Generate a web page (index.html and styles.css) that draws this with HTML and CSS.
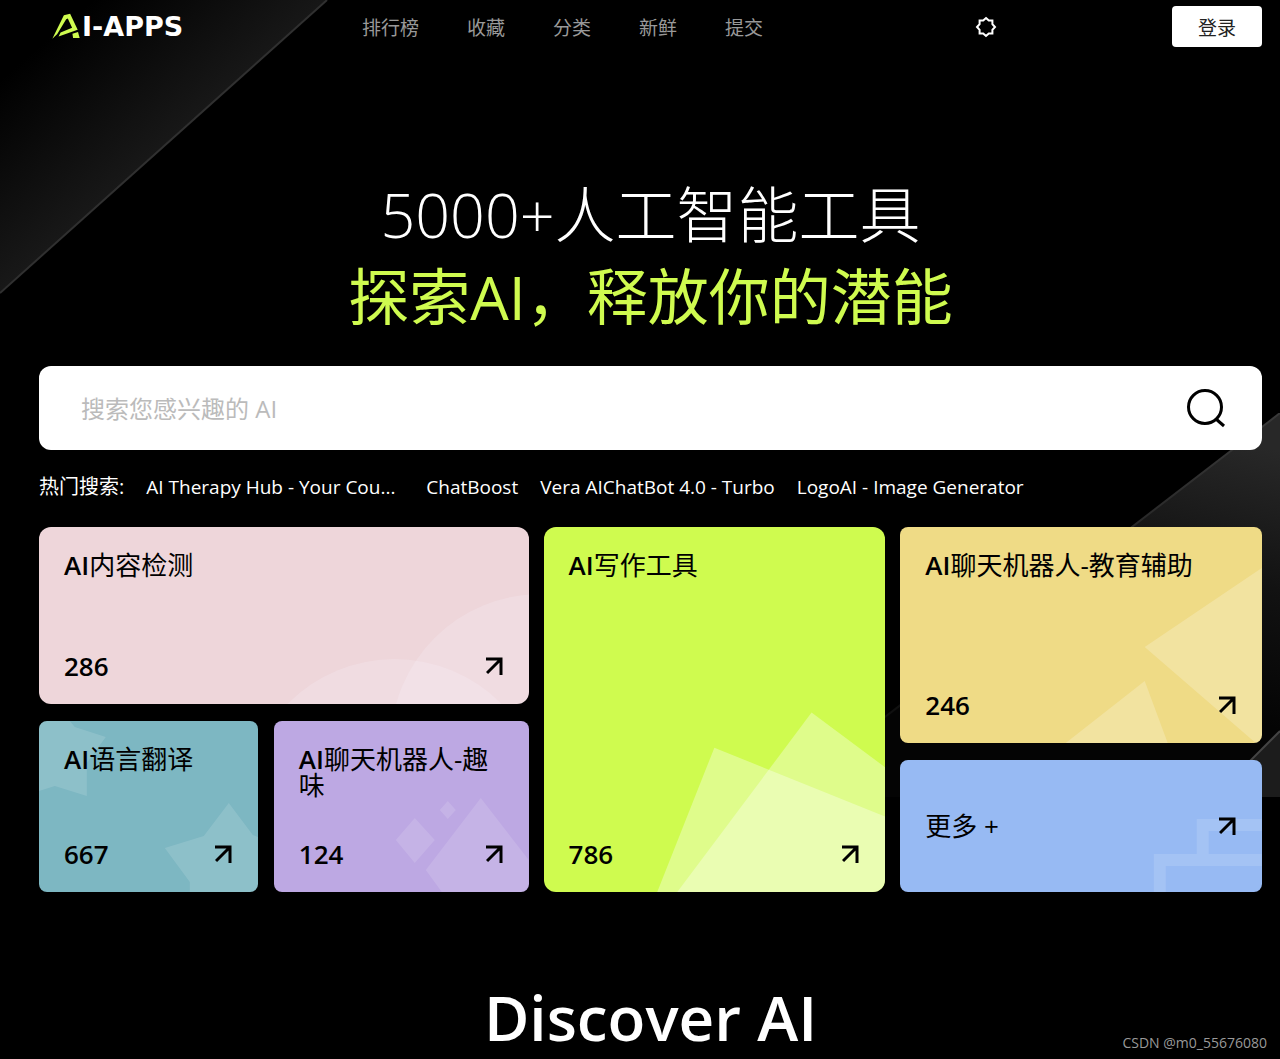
FILE: index.html
```html
<!DOCTYPE html>
<html lang="zh-CN">
<head>
<meta charset="utf-8">
<meta name="viewport" content="width=device-width, initial-scale=1">
<title>AI-APPS</title>
<link rel="stylesheet" href="styles.css">
</head>
<body>
<svg class="beam beam-left" viewBox="0 0 330 296" aria-hidden="true">
  <defs><linearGradient id="beamLeft" gradientUnits="userSpaceOnUse" x1="70" y1="20" x2="178" y2="146"><stop offset="0" stop-color="#000"/><stop offset="1" stop-color="#191919"/></linearGradient></defs>
  <path d="M0 0H327L0 293Z" fill="url(#beamLeft)"/>
  <path d="M327 0L0 293" stroke="#303030" stroke-width="2"/>
</svg>
<svg class="beam beam-right" viewBox="0 0 500 384" aria-hidden="true">
  <defs>
    <linearGradient id="beamRight" gradientUnits="userSpaceOnUse" x1="470" y1="30" x2="400" y2="290"><stop offset="0" stop-color="#282828"/><stop offset=".5" stop-color="#121212"/><stop offset="1" stop-color="#040404"/></linearGradient>
    <linearGradient id="beamEdge" x1="1" y1="0" x2="0" y2="1"><stop offset="0" stop-color="#3a3a3a"/><stop offset=".6" stop-color="#161616"/><stop offset="1" stop-color="#080808"/></linearGradient>
  </defs>
  <path d="M500 0L1 384H500Z" fill="url(#beamRight)"/>
  <path d="M500 0L1 384" stroke="url(#beamEdge)" stroke-width="2"/>
  <path d="M500 318L434 384H500Z" fill="#1c1c1c"/>
  <path d="M500 318L434 384" stroke="#444" stroke-width="2"/>
</svg>

<header class="header">
  <a class="logo" href="#" aria-label="AI-APPS">
    <svg class="logo-mark" viewBox="154 36 85 77" aria-hidden="true"><path d="M155 113L190 42L209 37L232 86L174 106L180 94L215 80L202 52L197 54L170 99Z"/><path d="M216 98L233 93L238 111H218Z"/></svg>
    <span>I-APPS</span>
  </a>
  <nav class="nav">
    <a href="#">排行榜</a>
    <a href="#">收藏</a>
    <a href="#">分类</a>
    <a href="#">新鲜</a>
    <a href="#">提交</a>
  </nav>
  <button class="theme" type="button" aria-label="切换主题">
    <svg viewBox="-11 -11 22 22" aria-hidden="true"><path d="M0 -9L2.8 -6.4L6.4 -6.4L6.4 -2.8L9 0L6.4 2.8L6.4 6.4L2.8 6.4L0 9L-2.8 6.4L-6.4 6.4L-6.4 2.8L-9 0L-6.4 -2.8L-6.4 -6.4L-2.8 -6.4Z"/></svg>
  </button>
  <button class="login" type="button">登录</button>
</header>

<main class="main">
  <h1 class="hero"><span class="hero-light">5000+人工智能工具</span><span class="hero-accent">探索AI，释放你的潜能</span></h1>

  <form class="search" role="search">
    <input type="text" aria-label="搜索" placeholder="搜索您感兴趣的 AI">
    <button type="button" aria-label="搜索">
      <svg viewBox="0 0 40 40" aria-hidden="true"><circle cx="19" cy="19" r="16.5"/><path d="M30 31L38 38"/></svg>
    </button>
  </form>

  <div class="hot">
    <span class="hot-label">热门搜索:</span>
    <a class="hot-long" href="#">AI Therapy Hub - Your Cou...</a>
    <a href="#">ChatBoost</a>
    <a href="#">Vera AIChatBot 4.0 - Turbo</a>
    <a href="#">LogoAI - Image Generator</a>
  </div>

  <section class="cards">
    <div class="col col-left">
      <a class="card card-pink" href="#">
        <svg class="art" viewBox="0 0 490 177" preserveAspectRatio="xMaxYMax slice" aria-hidden="true"><circle cx="356" cy="282" r="150"/><circle cx="502" cy="217" r="150"/></svg>
        <h2><b>AI</b>内容检测</h2>
        <div class="foot"><span>286</span><svg class="arrow" viewBox="0 0 18 18" aria-hidden="true"><path d="M0 2H15V18M15 2L1 16"/></svg></div>
      </a>
      <div class="pair">
        <a class="card card-teal" href="#">
          <svg class="art" viewBox="0 0 219 171" preserveAspectRatio="xMaxYMax slice" aria-hidden="true"><path d="M0 0H31L36 6L67 16L48 42V75L16 65L0 70Z"/><path d="M190 82L214 114L219 116V171H151V161L126 127L165 115Z"/></svg>
          <h2><b>AI</b>语言翻译</h2>
          <div class="foot"><span>667</span><svg class="arrow" viewBox="0 0 18 18" aria-hidden="true"><path d="M0 2H15V18M15 2L1 16"/></svg></div>
        </a>
        <a class="card card-purple" href="#">
          <svg class="art" viewBox="0 0 255 171" preserveAspectRatio="xMaxYMax slice" aria-hidden="true"><path d="M207 77L255 139V165L250 171H168L152 149Z"/><path d="M141 97L161 119L141 142L122 119Z"/><path d="M174 80L182 89L174 98L166 89Z"/></svg>
          <h2><b>AI</b>聊天机器人-趣味</h2>
          <div class="foot"><span>124</span><svg class="arrow" viewBox="0 0 18 18" aria-hidden="true"><path d="M0 2H15V18M15 2L1 16"/></svg></div>
        </a>
      </div>
    </div>
    <a class="card card-green" href="#">
      <svg class="art" viewBox="0 0 341 365" preserveAspectRatio="xMaxYMax slice" aria-hidden="true"><path d="M170 221L341 290V365H113Z"/><path d="M267 186L341 241V365H133Z"/></svg>
      <h2><b>AI</b>写作工具</h2>
      <div class="foot"><span>786</span><svg class="arrow" viewBox="0 0 18 18" aria-hidden="true"><path d="M0 2H15V18M15 2L1 16"/></svg></div>
    </a>
    <div class="col col-right">
      <a class="card card-yellow" href="#">
        <svg class="art" viewBox="0 0 362 216" preserveAspectRatio="xMaxYMax slice" aria-hidden="true"><path d="M245 120L362 41V216H356Z"/><path d="M245 154L268 216H166Z"/></svg>
        <h2><b>AI</b>聊天机器人-教育辅助</h2>
        <div class="foot"><span>246</span><svg class="arrow" viewBox="0 0 18 18" aria-hidden="true"><path d="M0 2H15V18M15 2L1 16"/></svg></div>
      </a>
      <a class="card card-blue" href="#">
        <svg class="art" viewBox="0 0 362 133" preserveAspectRatio="xMaxYMax slice" aria-hidden="true"><path d="M297 60H362V72H309V95H362V107H266V133H254V95H297Z"/></svg>
        <div class="foot"><span class="more">更多 +</span><svg class="arrow" viewBox="0 0 18 18" aria-hidden="true"><path d="M0 2H15V18M15 2L1 16"/></svg></div>
      </a>
    </div>
  </section>

  <h2 class="discover">Discover AI</h2>
</main>
<div class="watermark">CSDN @m0_55676080</div>
</body>
</html>
```
FILE: styles.css
```css
* {
  box-sizing: border-box;
}

body {
  position: relative;
  margin: 0;
  min-height: 100vh;
  background: #000;
  color: #fff;
  font-family: "Open Sans", "Noto Sans CJK SC", sans-serif;
  font-size: 19px;
}

a {
  color: inherit;
  text-decoration: none;
}

button {
  border: 0;
  padding: 0;
  background: none;
  font: inherit;
  cursor: pointer;
}

h1,
h2 {
  margin: 0;
}

/* slanted light beams behind the content */
.beam {
  position: absolute;
  z-index: -1;
  fill: none;
}

.beam-left {
  top: 0;
  left: 0;
  width: 330px;
}

.beam-right {
  top: 413px;
  right: 0;
  width: 500px;
}

.header {
  display: flex;
  align-items: center;
  height: 53px;
  padding: 0 18px 0 52px;
}

.logo {
  display: flex;
  align-items: center;
  gap: 2px;
  width: 132px;
  height: 28px;
  font: 700 27px/28px "DejaVu Sans", sans-serif;
}

.logo-mark {
  width: 28px;
  height: 28px;
  padding-bottom: 2px;
  fill: #cffb4f;
}

.nav {
  display: flex;
  gap: 48px;
  margin-left: 178px;
  color: #999;
}

.theme {
  width: 22px;
  height: 22px;
  margin: 0 175px 0 auto;
}

.theme svg {
  display: block;
  fill: none;
  stroke: #fff;
  stroke-width: 2;
}

.login {
  width: 90px;
  height: 41px;
  border-radius: 4px;
  background: #fff;
  color: #222;
}

.main {
  padding: 121px 18px 0 39px;
}

.hero {
  font-size: 61px;
  line-height: 82px;
  font-weight: 400;
  text-align: center;
}

.hero span {
  display: block;
}

.hero-light {
  font-weight: 300;
}

.hero-accent {
  color: #cffb4f;
}

.search {
  display: flex;
  align-items: center;
  height: 84px;
  margin-top: 28px;
  padding: 0 36px 0 42px;
  border-radius: 12px;
  background: #fff;
}

.search input {
  flex: 1;
  min-width: 0;
  height: 50px;
  border: 0;
  padding: 0;
  outline: 0;
  background: none;
  color: #000;
  font: 24px/48px "Open Sans", "Noto Sans CJK SC", sans-serif;
}

.search input::placeholder {
  color: #bbb;
  opacity: 1;
}

.search button {
  width: 40px;
  height: 40px;
}

.search svg {
  display: block;
  fill: none;
  stroke: #000;
  stroke-width: 3;
}

.hot {
  display: flex;
  flex-wrap: wrap;
  gap: 0 22px;
  margin-top: 22px;
  line-height: 30px;
}

.hot-label {
  font-size: 20px;
}

.hot-long {
  min-width: 258px;
}

.cards {
  display: grid;
  grid-template-columns: 490fr 342fr 362fr;
  gap: 15px;
  min-height: 365px;
  margin-top: 25px;
}

.col {
  display: grid;
  gap: 17px;
}

.col-left {
  grid-template-rows: 177fr 171fr;
}

.col-right {
  grid-template-rows: 216fr 132fr;
}

.pair {
  display: grid;
  grid-template-columns: 219fr 255fr;
  gap: 16px;
}

.card {
  position: relative;
  display: flex;
  flex-direction: column;
  justify-content: space-between;
  overflow: hidden;
  padding: 25px;
  border-radius: 8px;
  color: #000;
  font-size: 26px;
  line-height: 26px;
  font-weight: 600;
}

.card h2 {
  position: relative;
  font-size: 26px;
  font-weight: 400;
}

.card b {
  display: inline-block;
  font-weight: 600;
}

.foot {
  position: relative;
  display: flex;
  align-items: center;
  justify-content: space-between;
}

.more {
  font-weight: 400;
}

.art {
  position: absolute;
  inset: 0;
  width: 100%;
  height: 100%;
  fill: #fff;
}

.arrow {
  width: 18px;
  height: 18px;
  fill: none;
  stroke: #000;
  stroke-width: 3;
}

.card-pink {
  border-radius: 12px;
  background: #eed6da;
}

.card-teal {
  background: #7db7c2;
}

.card-purple {
  background: #bda8e3;
}

.card-green {
  border-radius: 12px;
  background: #cffb4f;
}

.card-yellow {
  background: #efdb86;
}

.card-blue {
  justify-content: center;
  background: #97baf3;
}

.art > * {
  fill-opacity: .13;
}

.card-pink .art > * {
  fill: #f8f4ff;
  fill-opacity: .2;
}

.card-green .art > * {
  fill-opacity: .34;
}

.card-yellow .art > * {
  fill-opacity: .22;
}

.discover {
  margin-top: 85px;
  font-size: 62px;
  line-height: 80px;
  font-weight: 600;
  text-align: center;
}

.watermark {
  position: absolute;
  right: 13px;
  bottom: 6px;
  color: #999;
  font: 14px/20px "Open Sans", sans-serif;
}
```
